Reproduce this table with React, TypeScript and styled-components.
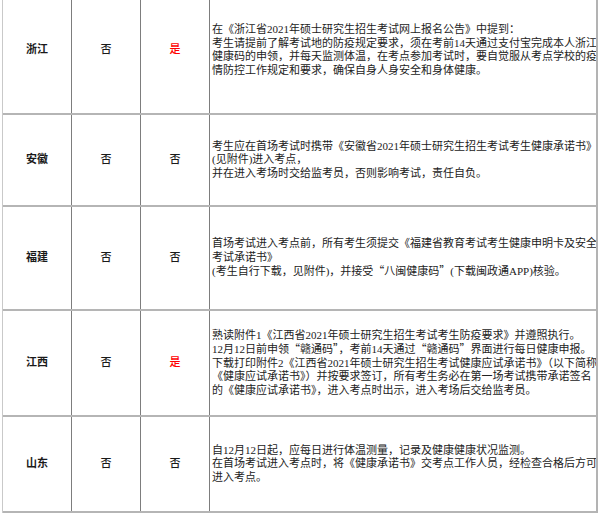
import React from 'react';
import styled, { createGlobalStyle } from 'styled-components';

const GlobalStyle = createGlobalStyle`
  html, body {
    margin: 0;
    padding: 0;
    background: #ffffff;
    overflow: hidden;
  }
  body {
    font-family: "Liberation Serif", "Noto Sans CJK SC", serif;
    color: #222;
  }
`;

const Viewport = styled.div`
  width: 600px;
  height: 515px;
  overflow: hidden;
  background: #fff;
`;

const Table = styled.div`
  margin-top: -13px;
  margin-left: 2px;
  width: 596px;
  border-left: 1px solid #c9c9c9;
  border-right: 2px solid #b3b3b3;
  box-sizing: border-box;
`;

const Row = styled.div<{ $height: number }>`
  display: grid;
  grid-template-columns: 69px 69px 69px 1fr;
  height: ${(p) => p.$height}px;
  border-bottom: 2px solid #b5b5b5;
  box-sizing: border-box;
`;

const Cell = styled.div`
  display: flex;
  align-items: center;
  justify-content: center;
  border-right: 1px solid #7d7d7d;
  font-size: 11px;
  line-height: 13.5px;
`;

const Province = styled(Cell)`
  font-weight: bold;
  color: #1a1a1a;
`;

const Answer = styled(Cell)<{ $yes?: boolean }>`
  color: ${(p) => (p.$yes ? '#ff0000' : '#1a1a1a')};
  font-weight: 500;
`;

const NoteCell = styled.div`
  display: flex;
  flex-direction: column;
  justify-content: center;
  padding-left: 2px;
  font-size: 11px;
  line-height: 13.5px;
  overflow: hidden;
`;

const Line = styled.div`
  white-space: nowrap;
`;

// full-width quotation marks, as the CJK font draws them
const Quote = styled.span`
  font-family: "Noto Sans CJK SC", sans-serif;
`;

type Entry = {
  province: string;
  first: string;
  second: string;
  height: number;
  lines: string[];
};

const rows: Entry[] = [
  {
    province: '浙江',
    first: '否',
    second: '是',
    height: 128,
    lines: [
      '在《浙江省2021年硕士研究生招生考试网上报名公告》中提到：',
      '考生请提前了解考试地的防疫规定要求，须在考前14天通过支付宝完成本人浙江',
      '健康码的申领，并每天监测体温，在考点参加考试时，要自觉服从考点学校的疫',
      '情防控工作规定和要求，确保自身人身安全和身体健康。',
    ],
  },
  {
    province: '安徽',
    first: '否',
    second: '否',
    height: 92,
    lines: [
      '考生应在首场考试时携带《安徽省2021年硕士研究生招生考试考生健康承诺书》',
      '(见附件)进入考点，',
      '并在进入考场时交给监考员，否则影响考试，责任自负。',
    ],
  },
  {
    province: '福建',
    first: '否',
    second: '否',
    height: 104,
    lines: [
      '首场考试进入考点前，所有考生须提交《福建省教育考试考生健康申明卡及安全',
      '考试承诺书》',
      '(考生自行下载，见附件)，并接受“八闽健康码”(下载闽政通APP)核验。',
    ],
  },
  {
    province: '江西',
    first: '否',
    second: '是',
    height: 106,
    lines: [
      '熟读附件1《江西省2021年硕士研究生招生考试考生防疫要求》并遵照执行。',
      '12月12日前申领“赣通码”，考前14天通过“赣通码”界面进行每日健康申报。',
      '下载打印附件2《江西省2021年硕士研究生招生考试健康应试承诺书》（以下简称',
      '《健康应试承诺书》）并按要求签订，所有考生务必在第一场考试携带承诺签名',
      '的《健康应试承诺书》，进入考点时出示，进入考场后交给监考员。',
    ],
  },
  {
    province: '山东',
    first: '否',
    second: '否',
    height: 96,
    lines: [
      '自12月12日起，应每日进行体温测量，记录及健康健康状况监测。',
      '在首场考试进入考点时，将《健康承诺书》交考点工作人员，经检查合格后方可',
      '进入考点。',
    ],
  },
];

function renderLine(text: string) {
  return text.split(/([“”])/).map((part, i) =>
    part === '“' || part === '”' ? <Quote key={i}>{part}</Quote> : part
  );
}

export default function App() {
  return (
    <Viewport>
      <GlobalStyle />
      <Table>
        {rows.map((r) => (
          <Row key={r.province} $height={r.height}>
            <Province>{r.province}</Province>
            <Answer $yes={r.first === '是'}>{r.first}</Answer>
            <Answer $yes={r.second === '是'}>{r.second}</Answer>
            <NoteCell>
              {r.lines.map((l, i) => (
                <Line key={i}>{renderLine(l)}</Line>
              ))}
            </NoteCell>
          </Row>
        ))}
      </Table>
    </Viewport>
  );
}
